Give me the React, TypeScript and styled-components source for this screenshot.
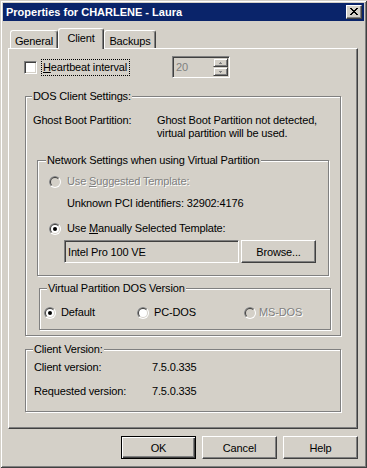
import React from "react";
import styled, { createGlobalStyle } from "styled-components";

const FACE = "#d4d0c8";
const SHADOW = "#808080";
const DARK = "#404040";
const LIGHT = "#ffffff";

const Global = createGlobalStyle`
  html, body { margin: 0; padding: 0; background: ${FACE}; }
  body {
    font-family: "Liberation Sans", Arial, sans-serif;
    font-size: 11px;
    letter-spacing: -0.15px;
    color: #000;
  }
  #root { width: 367px; height: 468px; }
  u { text-decoration: underline; text-underline-offset: 1px; }
`;

const Window = styled.div`
  box-sizing: border-box;
  width: 367px;
  height: 468px;
  background: ${FACE};
  padding: 3px;
  box-shadow: inset 1px 1px 0 ${FACE}, inset -1px -1px 0 ${DARK},
    inset 2px 2px 0 ${LIGHT}, inset -2px -2px 0 ${SHADOW};
  display: flex;
  flex-direction: column;
`;

const TitleBar = styled.div`
  height: 18px;
  background: #0a246a;
  display: flex;
  align-items: center;
  justify-content: space-between;
  padding: 0 2px 0 3px;
`;

const TitleText = styled.span`
  color: #fff;
  font-weight: bold;
  font-size: 11px;
  letter-spacing: 0;
  line-height: 13px;
`;

const CloseButton = styled.div`
  box-sizing: border-box;
  width: 16px;
  height: 14px;
  background: ${FACE};
  border: 1px solid;
  border-color: ${LIGHT} ${DARK} ${DARK} ${LIGHT};
  box-shadow: inset -1px -1px 0 ${SHADOW};
  display: flex;
  align-items: center;
  justify-content: center;
  padding: 0 1px 1px 0;
`;

const Body = styled.div`
  display: flex;
  flex-direction: column;
  padding: 0 6px 0 5px;
`;

const TabStrip = styled.div`
  margin-top: 7px;
  height: 20px;
  display: flex;
  align-items: flex-end;
  padding-left: 2px;
`;

const Tab = styled.div<{ $w: number; $active?: boolean }>`
  box-sizing: border-box;
  width: ${(p) => p.$w}px;
  height: ${(p) => (p.$active ? 21 : 18)}px;
  margin-bottom: ${(p) => (p.$active ? -1 : 0)}px;
  position: relative;
  z-index: ${(p) => (p.$active ? 1 : 0)};
  background: ${FACE};
  border-top: 1px solid ${LIGHT};
  border-left: 1px solid ${LIGHT};
  border-right: 1px solid ${DARK};
  border-radius: 3px 3px 0 0;
  box-shadow: inset -1px 0 0 ${SHADOW};
  text-align: center;
  line-height: 13px;
  padding-top: ${(p) => (p.$active ? 3 : 4)}px;
`;

const Panel = styled.div`
  box-sizing: border-box;
  width: 350px;
  height: 381px;
  border-top: 1px solid ${LIGHT};
  border-left: 1px solid ${LIGHT};
  border-right: 1px solid ${DARK};
  border-bottom: 1px solid ${DARK};
  box-shadow: inset -1px -1px 0 ${SHADOW};
  display: flex;
  flex-direction: column;
  padding: 7px 0 0 15px;
`;

const HeartbeatRow = styled.div`
  display: grid;
  grid-template-columns: 13px 127px 58px;
  column-gap: 4px;
  align-items: center;
  height: 22px;
`;

const CheckBox = styled.div`
  box-sizing: border-box;
  width: 13px;
  height: 13px;
  background: #fff;
  border: 1px solid;
  border-color: ${SHADOW} ${LIGHT} ${LIGHT} ${SHADOW};
  box-shadow: inset 1px 1px 0 ${DARK}, inset -1px -1px 0 ${FACE};
`;

const FocusLabel = styled.span`
  justify-self: start;
  display: inline-block;
  margin-left: 1px;
  padding: 1px 2px 1px 1px;
  line-height: 13px;
  outline: 1px dotted #000;
`;

const SpinBox = styled.div`
  box-sizing: border-box;
  width: 58px;
  height: 22px;
  background: ${FACE};
  border: 1px solid;
  border-color: ${SHADOW} ${LIGHT} ${LIGHT} ${SHADOW};
  box-shadow: inset 1px 1px 0 ${DARK}, inset -1px -1px 0 ${FACE};
  display: flex;
  padding: 1px;
`;

const SpinValue = styled.div`
  flex: 1;
  padding-left: 2px;
  display: flex;
  align-items: center;
  color: ${SHADOW};
`;

const SpinButtons = styled.div`
  width: 15px;
  display: flex;
  flex-direction: column;
`;

const SpinButton = styled.div`
  box-sizing: border-box;
  flex: 1;
  border: 1px solid;
  border-color: ${FACE} ${DARK} ${DARK} ${FACE};
  box-shadow: inset 1px 1px 0 ${LIGHT}, inset -1px -1px 0 ${SHADOW};
  display: flex;
  align-items: center;
  justify-content: center;
`;

const Group = styled.div<{ $w: number; $ml: number; $mt: number; $pb: number }>`
  box-sizing: border-box;
  width: ${(p) => p.$w}px;
  margin: ${(p) => p.$mt}px 0 0 ${(p) => p.$ml}px;
  padding-bottom: ${(p) => p.$pb}px;
  border: 1px solid ${SHADOW};
  box-shadow: inset 1px 1px 0 ${LIGHT}, 1px 1px 0 ${LIGHT};
  display: flex;
  flex-direction: column;
`;

const Legend = styled.div<{ $ml: number }>`
  align-self: flex-start;
  margin: -7px 0 0 ${(p) => p.$ml}px;
  padding: 0 1px;
  height: 13px;
  line-height: 13px;
  background: ${FACE};
`;

const InfoGrid = styled.div<{ $col: number; $pl: number; $mt: number }>`
  display: grid;
  grid-template-columns: ${(p) => p.$col}px auto;
  padding-left: ${(p) => p.$pl}px;
  margin-top: ${(p) => p.$mt}px;
  line-height: 13px;
`;

const Line = styled.div<{ $mt: number; $pl: number; $disabled?: boolean }>`
  margin-top: ${(p) => p.$mt}px;
  padding-left: ${(p) => p.$pl}px;
  line-height: 13px;
  color: ${(p) => (p.$disabled ? SHADOW : "#000")};
  text-shadow: ${(p) => (p.$disabled ? `1px 1px 0 ${LIGHT}` : "none")};
`;

const RadioRow = styled.label<{ $mt: number; $pl: number; $gap: number }>`
  display: flex;
  align-items: center;
  gap: ${(p) => p.$gap}px;
  height: 13px;
  margin-top: ${(p) => p.$mt}px;
  padding-left: ${(p) => p.$pl}px;
`;

const RadioText = styled.span<{ $disabled?: boolean }>`
  line-height: 13px;
  color: ${(p) => (p.$disabled ? SHADOW : "#000")};
  text-shadow: ${(p) => (p.$disabled ? `1px 1px 0 ${LIGHT}` : "none")};
`;

const RadioIcon = styled.svg`
  display: block;
  flex: none;
`;

const FieldRow = styled.div`
  display: flex;
  gap: 2px;
  margin-top: 5px;
  padding-left: 26px;
  height: 23px;
`;

const TextField = styled.div`
  box-sizing: border-box;
  width: 175px;
  height: 23px;
  background: ${FACE};
  border: 1px solid;
  border-color: ${SHADOW} ${LIGHT} ${LIGHT} ${SHADOW};
  box-shadow: inset 1px 1px 0 ${DARK}, inset -1px -1px 0 ${FACE};
  padding-left: 3px;
  display: flex;
  align-items: center;
`;

const Button = styled.div<{ $default?: boolean }>`
  box-sizing: border-box;
  width: 75px;
  height: 23px;
  background: ${FACE};
  display: flex;
  align-items: center;
  justify-content: center;
  border: 1px solid;
  border-color: ${(p) =>
    p.$default ? "#000" : `${LIGHT} ${DARK} ${DARK} ${LIGHT}`};
  box-shadow: ${(p) =>
    p.$default
      ? `inset 1px 1px 0 ${LIGHT}, inset -1px -1px 0 ${DARK}, inset -2px -2px 0 ${SHADOW}`
      : `inset -1px -1px 0 ${SHADOW}`};
`;

const DosRadios = styled.div`
  display: grid;
  grid-template-columns: 93px 107px auto;
  margin-top: 11px;
  padding-left: 4px;
  height: 13px;
`;

const ButtonRow = styled.div`
  width: 350px;
  margin-top: 7px;
  display: flex;
  justify-content: flex-end;
  gap: 6px;
`;

const Radio: React.FC<{ checked?: boolean; disabled?: boolean }> = ({
  checked,
  disabled,
}) => (
  <RadioIcon width={12} height={12} viewBox="0 0 12 12">
    <circle cx={6} cy={6} r={6} fill={LIGHT} />
    <path d="M1.757 10.243 A6 6 0 0 1 10.243 1.757 Z" fill={SHADOW} />
    <circle cx={6} cy={6} r={5} fill={FACE} />
    <path d="M2.464 9.536 A5 5 0 0 1 9.536 2.464 Z" fill={DARK} />
    <circle cx={6} cy={6} r={4} fill={disabled ? FACE : LIGHT} />
    {checked && (
      <circle cx={6} cy={6} r={2} fill={disabled ? SHADOW : "#000"} />
    )}
  </RadioIcon>
);

const CloseGlyph = () => (
  <svg width={8} height={7} viewBox="0 0 8 7" shapeRendering="crispEdges">
    <path
      d="M0 0h2v1H0zM6 0h2v1H6zM1 1h2v1H1zM5 1h2v1H5zM2 2h4v1H2zM3 3h2v1H3zM2 4h4v1H2zM1 5h2v1H1zM5 5h2v1H5zM0 6h2v1H0zM6 6h2v1H6z"
      fill="#000"
    />
  </svg>
);

const Arrow: React.FC<{ up?: boolean }> = ({ up }) => (
  <svg width={6} height={4} viewBox="0 0 6 4" shapeRendering="crispEdges">
    {up ? (
      <path d="M2 1h1v1H2zM1 2h3v1H1z" fill={SHADOW} />
    ) : (
      <path d="M1 1h3v1H1zM2 2h1v1H2z" fill={SHADOW} />
    )}
  </svg>
);

export default function App() {
  return (
    <>
      <Global />
      <Window>
        <TitleBar>
          <TitleText>Properties for CHARLENE - Laura</TitleText>
          <CloseButton>
            <CloseGlyph />
          </CloseButton>
        </TitleBar>
        <Body>
          <TabStrip>
            <Tab $w={48}>General</Tab>
            <Tab $w={46} $active>
              Client
            </Tab>
            <Tab $w={52}>Backups</Tab>
          </TabStrip>
          <Panel>
            <HeartbeatRow>
              <CheckBox />
              <FocusLabel>
                <u>H</u>eartbeat interval
              </FocusLabel>
              <SpinBox>
                <SpinValue>20</SpinValue>
                <SpinButtons>
                  <SpinButton>
                    <Arrow up />
                  </SpinButton>
                  <SpinButton>
                    <Arrow />
                  </SpinButton>
                </SpinButtons>
              </SpinBox>
            </HeartbeatRow>

            <Group $w={316} $ml={1} $mt={18} $pb={5}>
              <Legend $ml={6}>DOS Client Settings:</Legend>
              <InfoGrid $col={124} $pl={7} $mt={11}>
                <span>Ghost Boot Partition:</span>
                <span>
                  Ghost Boot Partition not detected,
                  <br />
                  virtual partition will be used.
                </span>
              </InfoGrid>

              <Group $w={292} $ml={11} $mt={20} $pb={12}>
                <Legend $ml={8}>Network Settings when using Virtual Partition</Legend>
                <RadioRow $mt={8} $pl={11} $gap={6}>
                  <Radio disabled />
                  <RadioText $disabled>
                    Use <u>S</u>uggested Template:
                  </RadioText>
                </RadioRow>
                <Line $mt={9} $pl={29}>
                  Unknown PCI identifiers: 32902:4176
                </Line>
                <RadioRow $mt={12} $pl={11} $gap={6}>
                  <Radio checked />
                  <RadioText>
                    Use <u>M</u>anually Selected Template:
                  </RadioText>
                </RadioRow>
                <FieldRow>
                  <TextField>Intel Pro 100 VE</TextField>
                  <Button>Browse...</Button>
                </FieldRow>
              </Group>

              <Group $w={292} $ml={13} $mt={12} $pb={10}>
                <Legend $ml={7}>Virtual Partition DOS Version</Legend>
                <DosRadios>
                  <RadioRow $mt={0} $pl={0} $gap={5}>
                    <Radio checked />
                    <RadioText>Default</RadioText>
                  </RadioRow>
                  <RadioRow $mt={0} $pl={0} $gap={5}>
                    <Radio />
                    <RadioText>PC-DOS</RadioText>
                  </RadioRow>
                  <RadioRow $mt={0} $pl={0} $gap={3}>
                    <Radio disabled />
                    <RadioText $disabled>MS-DOS</RadioText>
                  </RadioRow>
                </DosRadios>
              </Group>
            </Group>

            <Group $w={316} $ml={1} $mt={13} $pb={13}>
              <Legend $ml={7}>Client Version:</Legend>
              <InfoGrid $col={118} $pl={8} $mt={5}>
                <span>Client version:</span>
                <span>7.5.0.335</span>
              </InfoGrid>
              <InfoGrid $col={118} $pl={8} $mt={11}>
                <span>Requested version:</span>
                <span>7.5.0.335</span>
              </InfoGrid>
            </Group>
          </Panel>
          <ButtonRow>
            <Button $default>OK</Button>
            <Button>Cancel</Button>
            <Button>Help</Button>
          </ButtonRow>
        </Body>
      </Window>
    </>
  );
}
